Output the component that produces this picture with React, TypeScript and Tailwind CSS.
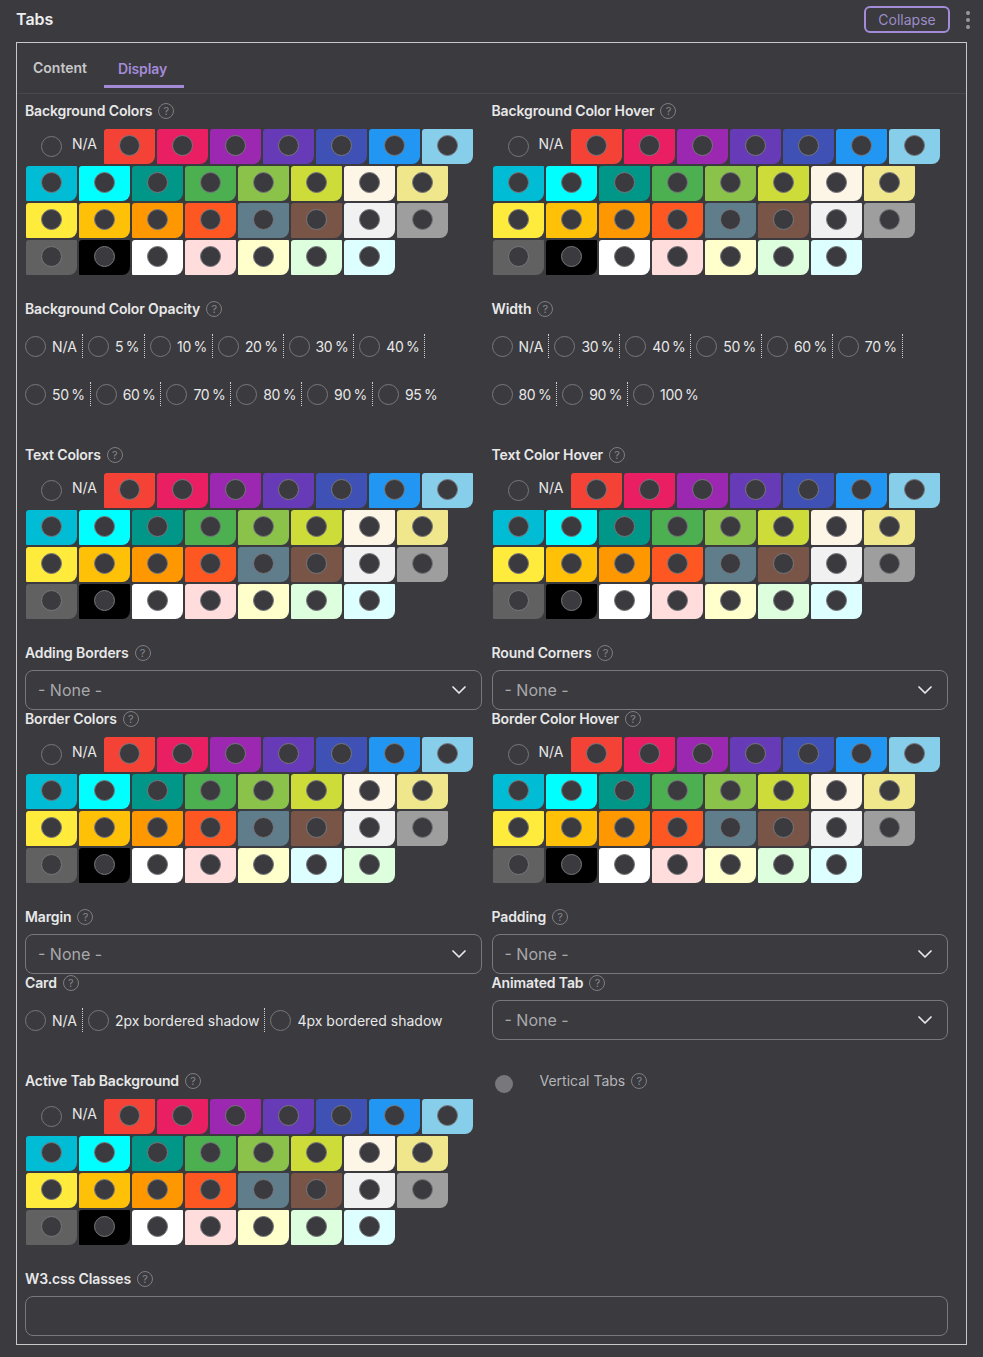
import { ChevronDown } from "lucide-react";

const ALL_COLORS = [
  "#f44336", "#e91e63", "#9c27b0", "#673ab7", "#3f51b5", "#2196f3", "#87ceeb",
  "#00bcd4", "#00ffff", "#009688", "#4caf50", "#8bc34a", "#cddc39", "#fdf5e6", "#f0e68c",
  "#ffeb3b", "#ffc107", "#ff9800", "#ff5722", "#607d8b", "#795548", "#f1f1f1", "#9e9e9e",
  "#616161", "#000000", "#ffffff", "#ffdddd", "#ffffcc", "#ddffdd", "#ddffff",
];

// border colors has the last two swapped
const BORDER_COLORS = [...ALL_COLORS.slice(0, 28), "#ddffff", "#ddffdd"];

const OPACITY = ["N/A", "5 %", "10 %", "20 %", "30 %", "40 %", "50 %", "60 %", "70 %", "80 %", "90 %", "95 %"];
const WIDTHS = ["N/A", "30 %", "40 %", "50 %", "60 %", "70 %", "80 %", "90 %", "100 %"];
const CARD = ["N/A", "2px bordered shadow", "4px bordered shadow"];

function Help() {
  return (
    <span className="ml-[6px] inline-flex h-[16px] w-[16px] translate-y-px items-center justify-center rounded-full border border-[#7d7d82] text-[11px] leading-none font-normal tracking-normal text-[#85858a]">
      ?
    </span>
  );
}

function Label({ text }: { text: string }) {
  return (
    <div className="flex h-[20px] items-center pb-[2px] text-[14px] font-semibold tracking-[-0.12px] text-[#e8e8e8]">
      {text}
      <Help />
    </div>
  );
}

function ColorField({ label, colors = ALL_COLORS }: { label: string; colors?: string[] }) {
  return (
    <div className="pb-[24px]">
      <div className="mb-[8px]">
        <Label text={label} />
      </div>
      <div className="flex flex-wrap gap-[2px] pl-px">
        <div className="flex h-[35px] w-[76px] items-center pl-[15px]">
          <span className="h-[21px] w-[21px] rounded-full border border-[#77777c]" />
          <span className="ml-[10px] -translate-y-[3px] text-[14px] text-[#e8e8e8]">N/A</span>
        </div>
        {colors.map((c) => (
          <div
            key={c}
            className="flex h-[35px] w-[51px] items-center justify-center rounded-tl-[3px] rounded-tr-[1px] rounded-br-[8px] rounded-bl-[1px]"
            style={{ backgroundColor: c }}
          >
            <span className="h-[21px] w-[21px] -translate-y-px rounded-full border border-[#77777c] bg-[#3a3a3f]" />
          </div>
        ))}
      </div>
    </div>
  );
}

function RadioField({ label, options }: { label: string; options: string[] }) {
  return (
    <div className="pb-[27px]">
      <div className="mb-[3px]">
        <Label text={label} />
      </div>
      <div className="flex flex-wrap">
        {options.map((o, i) => (
          <div key={o} className="flex h-[48px] items-center">
            <span className="h-[21px] w-[21px] rounded-full border border-[#77777c]" />
            <span
              className={`ml-[6px] text-[14px] text-[#e8e8e8] ${
                o.endsWith("%") ? "tracking-[-0.35px] [word-spacing:-1px]" : ""
              }`}
            >
              {o}
            </span>
            {i < options.length - 1 && (
              <span className="mx-[5px] h-[24px] border-r border-dotted border-[#d0d0d0]" />
            )}
          </div>
        ))}
      </div>
    </div>
  );
}

function SelectField({ label }: { label: string }) {
  return (
    <div>
      <div className="mb-[7px]">
        <Label text={label} />
      </div>
      <div className="-mb-px flex h-[40px] items-center justify-between rounded-[8px] border border-[#77777c] pr-[10px] pl-[12px] text-[16px] text-[#a9a9ac]">
        - None -
        <ChevronDown size={24} strokeWidth={1.75} className="text-[#e8e8e8]" />
      </div>
    </div>
  );
}

export default function App() {
  return (
    <div className="min-h-[1357px] bg-[#3a3a3f] font-['Inter',sans-serif]">
      <div className="flex h-[42px] items-center justify-between pr-[13px] pl-[16px]">
        <span className="-translate-y-[2px] text-[16px] font-semibold text-[#eeeeee]">Tabs</span>
        <div className="flex items-center gap-[16px]">
          <button className="-mt-[3px] flex h-[27px] w-[86px] items-center justify-center rounded-[6px] border-2 border-[#a48bd8] text-[14px] text-[#9c8cc8]">
            Collapse
          </button>
          <div className="-mt-[3px] flex flex-col gap-[3px]">
            <span className="h-[4px] w-[4px] rounded-full bg-[#9a9a9e]" />
            <span className="h-[4px] w-[4px] rounded-full bg-[#9a9a9e]" />
            <span className="h-[4px] w-[4px] rounded-full bg-[#9a9a9e]" />
          </div>
        </div>
      </div>

      <div className="mr-[16px] ml-[16px] border border-[#c8c8c8]">
        <div className="flex h-[51px] border-b border-[#47474c] pl-[16px] text-[14px] font-semibold">
          <div className="pt-[14px] text-[#c8c8c8]">Content</div>
          <div className="ml-[17px] flex h-[45px] w-[80px] justify-center border-b-[3px] border-[#a48bd8] pt-[15px] pr-[3px] tracking-[-0.1px] text-[#a48bd8]">
            Display
          </div>
        </div>

        <div className="grid grid-cols-2 gap-x-[10px] pt-[7px] pr-[18px] pb-[8px] pl-[8px]">
          <ColorField label="Background Colors" />
          <ColorField label="Background Color Hover" />

          <RadioField label="Background Color Opacity" options={OPACITY} />
          <RadioField label="Width" options={WIDTHS} />

          <ColorField label="Text Colors" />
          <ColorField label="Text Color Hover" />

          <SelectField label="Adding Borders" />
          <SelectField label="Round Corners" />

          <ColorField label="Border Colors" colors={BORDER_COLORS} />
          <ColorField label="Border Color Hover" />

          <SelectField label="Margin" />
          <SelectField label="Padding" />

          <RadioField label="Card" options={CARD} />
          <SelectField label="Animated Tab" />

          <ColorField label="Active Tab Background" />
          <div className="flex h-[18px] items-center">
            <span className="mt-[8px] ml-[3px] h-[18px] w-[18px] rounded-full bg-[#77777c]" />
            <span className="ml-[27px] text-[14px] text-[#b5b5b8]">Vertical Tabs</span>
            <Help />
          </div>

          <div className="col-span-2">
            <div className="mb-[7px]">
              <Label text="W3.css Classes" />
            </div>
            <div className="h-[40px] rounded-[8px] border border-[#77777c]" />
          </div>
        </div>
      </div>
    </div>
  );
}
